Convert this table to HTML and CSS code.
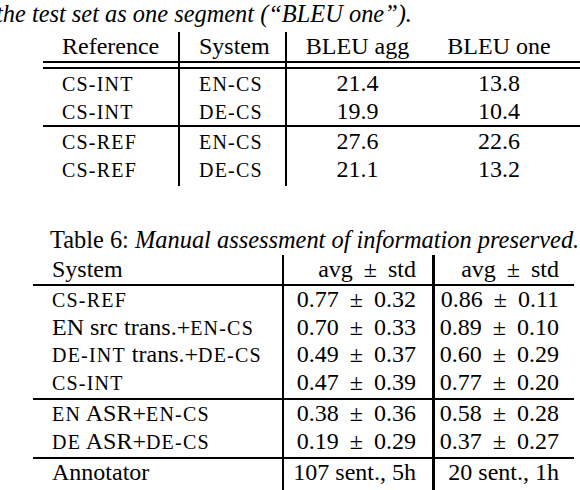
FILE: index.html
```html
<!DOCTYPE html>
<html>
<head>
<meta charset="utf-8">
<link rel="stylesheet" href="styles.css">
</head>
<body>
<p class="cap cap1">the test set as one segment (“BLEU one”).</p>
<div class="tbl t1">
  <div class="row head">
    <div class="cell">Reference</div>
    <div class="cell">System</div>
    <div class="cell">BLEU agg</div>
    <div class="cell">BLEU one</div>
  </div>
  <div class="row gap"><div class="cell"></div><div class="cell"></div><div class="cell"></div><div class="cell"></div></div>
  <div class="row ruled">
    <div class="cell"><span class="sc">CS-INT</span></div>
    <div class="cell"><span class="sc">EN-CS</span></div>
    <div class="cell">21.4</div>
    <div class="cell">13.8</div>
  </div>
  <div class="row">
    <div class="cell"><span class="sc">CS-INT</span></div>
    <div class="cell"><span class="sc">DE-CS</span></div>
    <div class="cell">19.9</div>
    <div class="cell">10.4</div>
  </div>
  <div class="row ruled">
    <div class="cell"><span class="sc">CS-REF</span></div>
    <div class="cell"><span class="sc">EN-CS</span></div>
    <div class="cell">27.6</div>
    <div class="cell">22.6</div>
  </div>
  <div class="row last">
    <div class="cell"><span class="sc">CS-REF</span></div>
    <div class="cell"><span class="sc">DE-CS</span></div>
    <div class="cell">21.1</div>
    <div class="cell">13.2</div>
  </div>
</div>

<p class="cap cap2">Table 6: <em>Manual assessment of information preserved.</em></p>
<div class="tbl t2">
  <div class="row head">
    <div class="cell">System</div>
    <div class="cell">avg <span class="pm">±</span> std</div>
    <div class="cell">avg <span class="pm">±</span> std</div>
  </div>
  <div class="row">
    <div class="cell"><span class="sc">CS-REF</span></div>
    <div class="cell">0.77 <span class="pm">±</span> 0.32</div>
    <div class="cell">0.86 <span class="pm">±</span> 0.11</div>
  </div>
  <div class="row">
    <div class="cell">EN src trans.+<span class="sc">EN-CS</span></div>
    <div class="cell">0.70 <span class="pm">±</span> 0.33</div>
    <div class="cell">0.89 <span class="pm">±</span> 0.10</div>
  </div>
  <div class="row">
    <div class="cell"><span class="sc">DE-INT</span> trans.+<span class="sc">DE-CS</span></div>
    <div class="cell">0.49 <span class="pm">±</span> 0.37</div>
    <div class="cell">0.60 <span class="pm">±</span> 0.29</div>
  </div>
  <div class="row end">
    <div class="cell"><span class="sc">CS-INT</span></div>
    <div class="cell">0.47 <span class="pm">±</span> 0.39</div>
    <div class="cell">0.77 <span class="pm">±</span> 0.20</div>
  </div>
  <div class="row ruled">
    <div class="cell"><span class="sc">EN</span> ASR+<span class="sc">EN-CS</span></div>
    <div class="cell">0.38 <span class="pm">±</span> 0.36</div>
    <div class="cell">0.58 <span class="pm">±</span> 0.28</div>
  </div>
  <div class="row end">
    <div class="cell"><span class="sc">DE</span> ASR+<span class="sc">DE-CS</span></div>
    <div class="cell">0.19 <span class="pm">±</span> 0.29</div>
    <div class="cell">0.37 <span class="pm">±</span> 0.27</div>
  </div>
  <div class="row ruled last">
    <div class="cell">Annotator</div>
    <div class="cell">107 sent., 5h</div>
    <div class="cell">20 sent., 1h</div>
  </div>
</div>
</body>
</html>
```

FILE: styles.css
```css
* { box-sizing: border-box; }
html, body { margin: 0; padding: 0; background: #fff; }
body {
  font-family: "Liberation Serif", "Times New Roman", serif;
  font-size: 24px;
  color: #000;
  width: 580px;
  height: 490px;
  overflow: hidden;
}
.cap { margin: 0; font-size: 24.4px; line-height: 27px; white-space: nowrap; }
.cap1 { margin-left: -4px; font-style: italic; }
.cap2 { margin: 40px 0 2px 50px; }
.cap2 em { font-style: italic; }

.sc { font-size: 20px; line-height: 1; letter-spacing: 1.2px; }
.pm { margin: 0 5px; }

.row { display: grid; }
.cell { line-height: 28px; white-space: nowrap; }
.head .cell { line-height: 29px; }
.head { border-bottom: 2px solid #000; }
.gap { height: 4px; }
.ruled { border-top: 2px solid #000; }

.t1 { margin: 5px 0 0 43px; width: 545px; }
.t1 .row { grid-template-columns: 137px 107px 141px 1fr; }
.t1 .cell:nth-child(1),
.t1 .cell:nth-child(2) { border-right: 2px solid #000; padding-left: 19px; }
.t1 .cell:nth-child(3) { text-align: center; }
.t1 .cell:nth-child(4) { text-align: center; padding-right: 18px; }
.t1 .last .cell { padding-bottom: 3px; }

.t2 { margin-left: 33px; width: 541px; }
.t2 .row { grid-template-columns: 251px 151px 1fr; }
.t2 .cell { line-height: 27.5px; }
.t2 .head .cell { line-height: 29px; }
.t2 .cell:nth-child(1) { border-right: 2px solid #000; padding-left: 19px; }
.t2 .cell:nth-child(2) { border-right: 3px solid #000; text-align: right; padding-right: 16px; }
.t2 .cell:nth-child(3) { text-align: right; padding-right: 15px; }
.t2 .end .cell { padding-bottom: 2px; }
.t2 .last .cell { padding-bottom: 30px; }
```
